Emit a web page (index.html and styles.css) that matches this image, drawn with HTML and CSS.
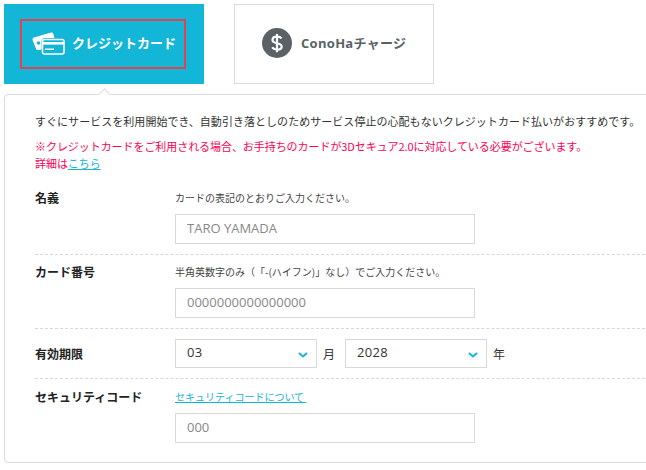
FILE: index.html
```html
<!DOCTYPE html>
<html lang="ja">
<head>
<meta charset="utf-8">
<title>お支払い方法</title>
<link rel="stylesheet" href="styles.css">
</head>
<body>
<div class="tabs">
  <div class="tab tab-active">
    <div class="tab-focus">
      <svg class="card-icon" width="34" height="24" viewBox="0 0 34 24">
        <path d="M2 6.500 19 1.500c1-.3 2 .2 2.300 1.200L22.500 7H13c-2 0-3.500 1.500-3.500 3.500v8L6 19c-1 .2-1.800-.3-2-1.200L.5 9C.3 7.800 1 6.800 2 6.500Z" fill="#fff"/>
        <rect x="10.500" y="8.500" width="21.500" height="14.500" rx="2" fill="none" stroke="#fff" stroke-width="1.600"/>
        <rect x="10.500" y="11" width="21.500" height="2.600" fill="#fff"/>
        <rect x="13" y="17.500" width="9" height="1.400" fill="#fff"/>
        <circle cx="6.500" cy="12" r="1.800" fill="#14b6d8"/>
      </svg>
      <span class="tab-label">クレジットカード</span>
    </div>
  </div>
  <div class="tab tab-idle">
    <svg class="dollar-icon" width="30" height="30" viewBox="0 0 30 30">
      <circle cx="15" cy="15" r="15" fill="#5a6266"/>
      <path d="M19.500 10.500C18.700 9.300 17 8.700 15 8.700c-2.600 0-4.500 1.200-4.500 3.200 0 4.400 9.200 2.200 9.200 6.500 0 2-2 3.100-4.600 3.100-2.200 0-4-.8-4.800-2.200" fill="none" stroke="#fff" stroke-width="2.200"/>
      <path d="M15 6v18.200" stroke="#fff" stroke-width="2.200"/>
    </svg>
    <span class="tab-label tab-label-idle">ConoHaチャージ</span>
  </div>
</div>
<div class="panel">
  <span class="panel-arrow"></span>
  <p class="lead">すぐにサービスを利用開始でき、自動引き落としのためサービス停止の心配もないクレジットカード払いがおすすめです。</p>
  <p class="notice">※クレジットカードをご利用される場合、お手持ちのカードが3Dセキュア2.0に対応している必要がございます。<br>詳細は<a class="link" href="#">こちら</a></p>
  <div class="row row-name">
    <div class="row-label">名義</div>
    <div class="row-body">
      <p class="hint">カードの表記のとおりご入力ください。</p>
      <input class="field" type="text" placeholder="TARO YAMADA">
    </div>
  </div>
  <div class="row row-number">
    <div class="row-label">カード番号</div>
    <div class="row-body">
      <p class="hint">半角英数字のみ（「-(ハイフン)」なし）でご入力ください。</p>
      <input class="field" type="text" placeholder="0000000000000000">
    </div>
  </div>
  <div class="row row-expiry">
    <div class="row-label row-label-mid">有効期限</div>
    <div class="row-body expiry">
      <div class="select-wrap">
        <select class="select"><option>03</option></select>
        <svg class="chevron" width="10" height="6" viewBox="0 0 10 6"><path d="M1 1l4 3.500L9 1" fill="none" stroke="#14b6d8" stroke-width="2"/></svg>
      </div>
      <span class="unit">月</span>
      <div class="select-wrap">
        <select class="select"><option>2028</option></select>
        <svg class="chevron" width="10" height="6" viewBox="0 0 10 6"><path d="M1 1l4 3.500L9 1" fill="none" stroke="#14b6d8" stroke-width="2"/></svg>
      </div>
      <span class="unit">年</span>
    </div>
  </div>
  <div class="row row-code">
    <div class="row-label">セキュリティコード</div>
    <div class="row-body">
      <p class="hint"><a class="link" href="#">セキュリティコードについて&nbsp;</a></p>
      <input class="field" type="text" placeholder="000">
    </div>
  </div>
</div>
</body>
</html>
```
FILE: styles.css
```css
html, body {
  margin: 0;
  padding: 0;
  height: 470px;
  overflow: hidden;
  background: #fff;
}
body {
  font-family: "Noto Sans CJK JP", "Noto Sans", sans-serif;
  color: #333;
  font-size: 11px;
  text-spacing-trim: space-all;
}
p { margin: 0; }
.tabs {
  display: flex;
  gap: 30px;
  padding: 4px 0 0 4px;
}
.tab {
  width: 200px;
  height: 80px;
  box-sizing: border-box;
  display: flex;
  align-items: center;
}
.tab-active {
  background: #14b6d8;
  padding-left: 16px;
}
.tab-focus {
  width: 166px;
  height: 50px;
  box-sizing: border-box;
  border: 2px solid #e2434f;
  display: flex;
  align-items: center;
  padding-left: 10px;
}
.card-icon { margin: 0 6px 2px 0; flex: none; }
.tab-label {
  font-size: 13px;
  font-weight: 700;
  color: #fff;
  white-space: nowrap;
  margin-bottom: 3px;
}
.tab-idle {
  border: 1px solid #dcdcdc;
  padding-left: 27px;
}
.dollar-icon { margin: 0 9px 2px 0; flex: none; }
.tab-label-idle {
  color: #5a6266;
  font-family: "Open Sans", "Noto Sans CJK JP", sans-serif;
  letter-spacing: 0.3px;
}
.panel {
  position: relative;
  margin: 10px -40px 0 4px;
  height: 369px;
  box-sizing: border-box;
  border: 1px solid #dcdcdc;
  border-radius: 4px;
  padding: 17px 30px 0;
}
.panel-arrow {
  position: absolute;
  left: 95px;
  top: -5px;
  width: 8px;
  height: 8px;
  background: #fff;
  border-left: 1px solid #dcdcdc;
  border-top: 1px solid #dcdcdc;
  transform: rotate(45deg);
}
.lead {
  line-height: 18px;
  white-space: nowrap;
  letter-spacing: 0.04px;
}
.notice {
  margin-top: 8px;
  color: #ff0055;
  line-height: 17px;
  white-space: nowrap;
  letter-spacing: -0.06px;
}
.link { color: #14b6d8; text-decoration: underline; }
.row {
  display: flex;
  box-sizing: border-box;
  border-bottom: 1px dashed #d8d8d8;
}
.row-code { border-bottom: 0; }
.row-name { margin-top: 10px; height: 73px; padding-top: 7px; }
.row-number { height: 74px; padding-top: 8px; }
.row-expiry { height: 50px; padding-top: 10px; }
.row-code { padding-top: 9px; }
.row-label {
  width: 140px;
  flex: none;
  font-size: 12px;
  font-weight: 700;
  line-height: 18px;
  color: #222;
}
.row-label-mid { padding-top: 6px; }
.hint {
  font-size: 10px;
  line-height: 16px;
  height: 16px;
  padding-top: 1px;
  color: #444;
  margin-bottom: 8px;
}
.field {
  display: block;
  width: 300px;
  height: 30px;
  box-sizing: border-box;
  border: 1px solid #d9d9d9;
  border-radius: 0;
  padding: 0 11px 3px;
  font: 13px "Open Sans", "Noto Sans CJK JP", sans-serif;
  color: #333;
  background: #fff;
  outline: 0;
}
.field::placeholder { color: #888; opacity: 1; }
.expiry {
  display: flex;
  align-items: center;
  height: 29px;
}
.select-wrap {
  position: relative;
  width: 142px;
  height: 29px;
}
.select {
  appearance: none;
  -webkit-appearance: none;
  display: block;
  width: 100%;
  height: 100%;
  box-sizing: border-box;
  border: 1px solid #d9d9d9;
  border-radius: 0;
  background: #fff;
  padding: 0 0 3px 11px;
  font: 13px "Open Sans", "Noto Sans CJK JP", sans-serif;
  letter-spacing: 0.3px;
  color: #333;
}
.chevron {
  position: absolute;
  right: 9px;
  top: 13px;
}
.unit {
  width: 28px;
  box-sizing: border-box;
  padding-left: 6px;
  font-size: 12px;
  color: #333;
}
```
